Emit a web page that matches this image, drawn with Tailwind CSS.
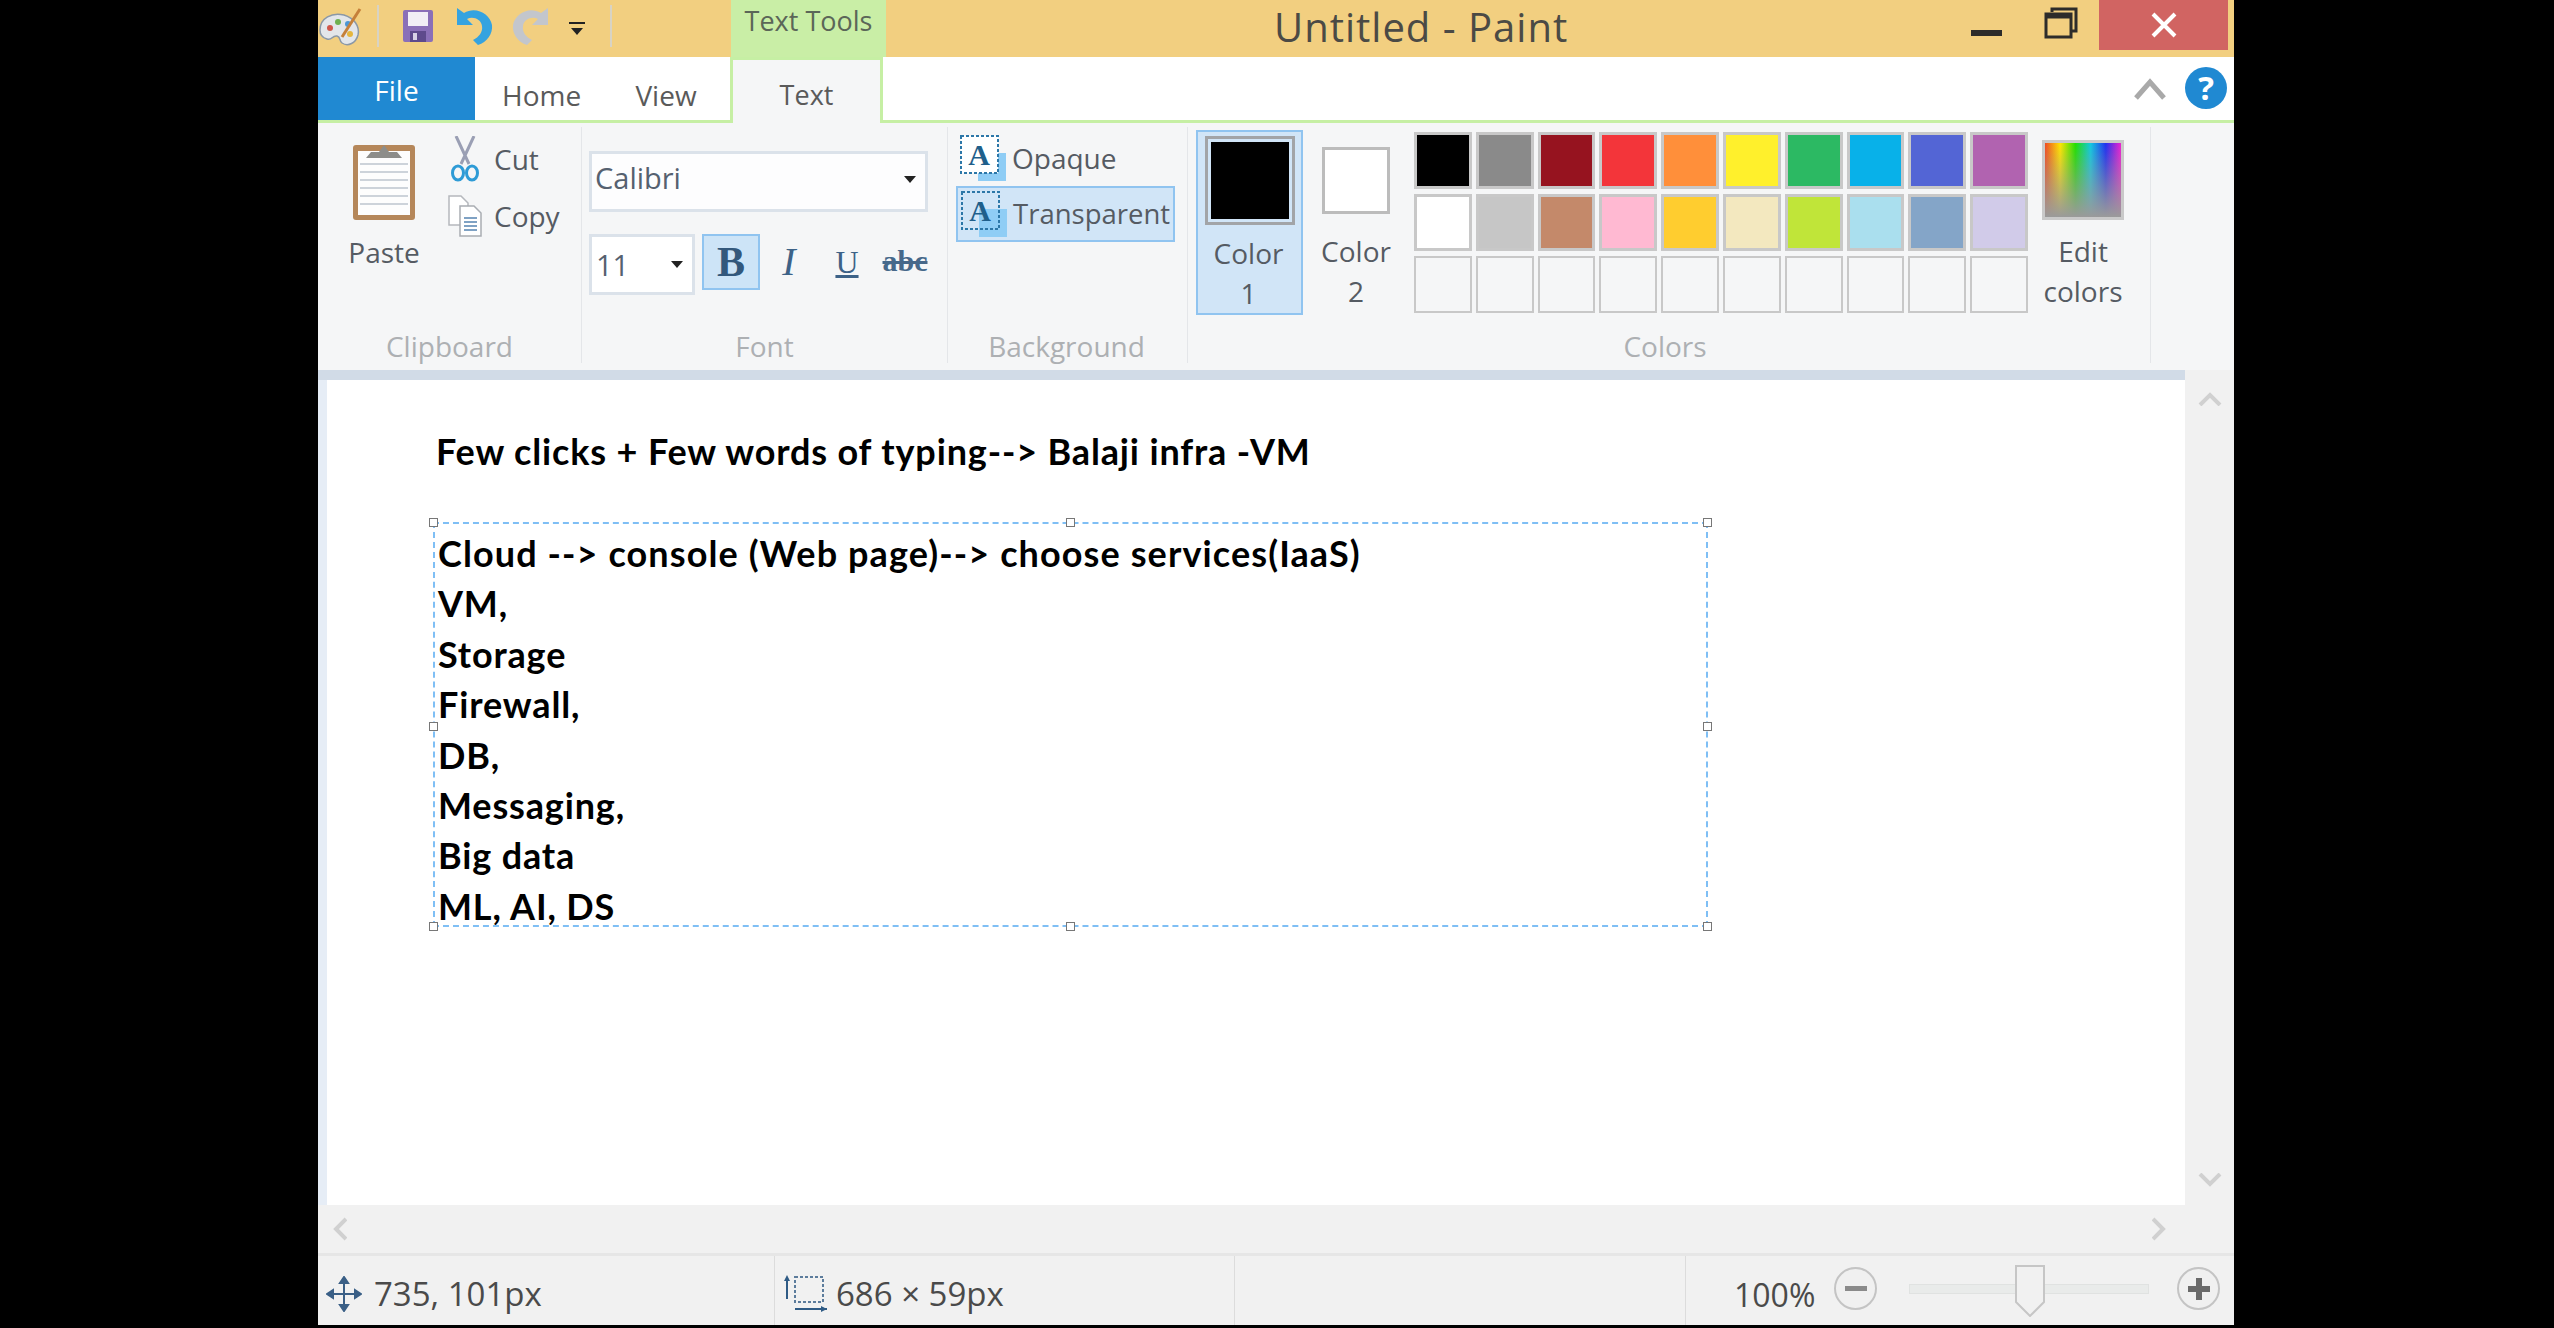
<!DOCTYPE html>
<html lang="en">
<head>
  <meta charset="UTF-8" />
  <title>Untitled - Paint</title>
  <script src="https://cdn.jsdelivr.net/npm/@tailwindcss/browser@4"></script>
</head>
<body class="bg-black w-[2554px] h-[1328px] overflow-hidden pl-[318px] font-['Open_Sans',sans-serif] text-[#555b63]">
  <div class="w-[1916px] h-[1325px] flex flex-col bg-[#f1f1f1]">

    <!-- title bar -->
    <div class="h-[57px] flex items-start bg-[#f2cf80] shrink-0">
      <svg class="w-[44px] h-[46px] mt-[4px]" viewBox="0 0 44 46">
        <path d="M2 26C2 14 14 8 26 11c10 3 16 11 14 20-2 8-10 12-16 8-3-2-1-6-5-7-5-1-5 5-10 3-4-1-7-4-7-9z" fill="#e3e6ea" stroke="#8b98a6" stroke-width="1.5"/>
        <circle cx="12" cy="24" r="3" fill="#d0574a"/><circle cx="20" cy="18" r="3" fill="#6fb04f"/><circle cx="30" cy="20" r="3" fill="#4c97d6"/><circle cx="32" cy="30" r="3" fill="#e5b63e"/>
        <path d="M24 33L42 5" stroke="#c5803a" stroke-width="3"/>
      </svg>
      <div class="w-[2px] h-[42px] mt-[5px] ml-[15px] bg-[#d8d3c4]"></div>
      <svg class="w-[30px] h-[32px] mt-[10px] ml-[24px]" viewBox="0 0 30 32">
        <rect width="30" height="32" rx="2" fill="#8a6fb8"/><rect x="5" y="2" width="20" height="14" fill="#f1eef6"/><rect x="7" y="21" width="16" height="11" fill="#5e4a8c"/><rect x="10" y="23" width="4" height="7" fill="#d8d2e6"/>
      </svg>
      <svg class="w-[38px] h-[40px] mt-[6px] ml-[23px]" viewBox="0 0 38 40">
        <path d="M1 2v17h16l-6-6c6-3 14 0 15 7 1 6-3 11-9 14l5 5c9-3 15-11 14-20C34 8 20 0 8 7L1 2z" fill="#35a3e0"/>
      </svg>
      <svg class="w-[38px] h-[40px] mt-[6px] ml-[17px]" viewBox="0 0 38 40">
        <path d="M37 2v17H21l6-6c-6-3-14 0-15 7-1 6 3 11 9 14l-5 5C7 36 1 28 2 19 4 8 18 0 30 7l7-5z" fill="#c3c6cc"/>
      </svg>
      <div class="w-[16px] mt-[22px] ml-[20px]">
        <div class="h-[2px] bg-[#222]"></div>
        <div class="mt-[4px] mx-auto w-0 h-0 border-x-[6px] border-x-transparent border-t-[7px] border-t-[#222]"></div>
      </div>
      <div class="w-[2px] h-[42px] mt-[5px] ml-[25px] bg-[#d8d3c4]"></div>
      <div class="w-[155px] h-[57px] ml-[119px] bg-[#c9eea6] text-center text-[27px] leading-[42px] text-[#5b6658] whitespace-nowrap">Text Tools</div>
      <div class="ml-[388px] text-[40px] tracking-[1px] leading-[54px] text-[#4b4a45] whitespace-nowrap">Untitled - Paint</div>
      <div class="ml-[403px] w-[31px] h-[6px] mt-[30px] bg-[#2d2c2a]"></div>
      <svg class="w-[34px] h-[32px] mt-[7px] ml-[42px]" viewBox="0 0 34 32" fill="none" stroke="#2d2c2a" stroke-width="3">
        <path d="M8 5V2h24v22h-5"/><rect x="2" y="7" width="25" height="23"/><path d="M2 9h25" stroke-width="5"/>
      </svg>
      <div class="ml-[21px] w-[129px] h-[50px] bg-[#d16462] flex items-center justify-center">
        <svg class="w-[26px] h-[26px]" viewBox="0 0 26 26" stroke="#fff" stroke-width="4"><path d="M2 2l22 22M24 2L2 24"/></svg>
      </div>
    </div>

    <!-- tabs -->
    <div class="h-[66px] flex items-start bg-white border-b-[3px] border-[#c6efa4] shrink-0 relative">
      <div class="w-[157px] h-[63px] bg-[#2089d2] text-white text-center text-[28px] leading-[66px]">File</div>
      <div class="ml-[27px] w-[78px] text-center text-[28px] leading-[76px] text-[#5a5a5a]">Home</div>
      <div class="ml-[54px] w-[64px] text-center text-[28px] leading-[76px] text-[#5a5a5a]">View</div>
      <div class="ml-[32px] w-[153px] h-[66px] bg-[#f5f6f7] border-x-[3px] border-t-[3px] border-[#c6efa4] text-center text-[27px] leading-[70px] text-[#5a5a5a]">Text</div>
      <svg class="absolute left-[1816px] top-[20px] w-[32px] h-[24px]" viewBox="0 0 32 24" fill="none" stroke="#a9a9a9" stroke-width="5"><path d="M2 21L16 5l14 16"/></svg>
      <div class="absolute left-[1867px] top-[10px] w-[42px] h-[42px] rounded-full bg-[#2089d2] text-white text-center font-bold text-[33px] leading-[42px]">?</div>
    </div>

    <!-- ribbon -->
    <div class="h-[247px] flex items-start bg-[#f5f6f7] shrink-0 pt-[4px] text-[28px]">
      <!-- clipboard -->
      <div class="w-[264px] h-[236px] border-r-[1px] border-[#e4e6e9] flex flex-col">
        <div class="flex-1 flex items-start">
          <div class="ml-[34px] w-[64px] mt-[13px] flex flex-col items-center">
            <svg class="w-[64px] h-[80px]" viewBox="0 0 64 80">
              <rect x="1" y="5" width="62" height="75" rx="3" fill="#b5875a"/><rect x="6" y="11" width="52" height="64" fill="#fdfdfd"/>
              <path d="M8 24h48M8 32h48M8 40h48M8 48h48M8 56h48M8 64h48" stroke="#cdd3da" stroke-width="2"/>
              <path d="M14 18l5-6h8l5-7 5 7h8l5 6z" fill="#8d8d8a"/>
            </svg>
            <div class="mt-[12px] leading-[40px] whitespace-nowrap">Paste</div>
          </div>
          <div class="ml-[32px] mt-[8px] flex flex-col">
            <div class="h-[48px] flex items-center">
              <svg class="w-[34px] h-[46px]" viewBox="0 0 34 46" fill="none">
                <path d="M8 0l13 28M26 0L13 28" stroke="#9a9fb4" stroke-width="3"/>
                <ellipse cx="10" cy="37" rx="5.5" ry="7" stroke="#2e9bd6" stroke-width="3"/><ellipse cx="24" cy="37" rx="5.5" ry="7" stroke="#2e9bd6" stroke-width="3"/>
              </svg>
              <span class="ml-[12px]">Cut</span>
            </div>
            <div class="h-[40px] mt-[13px] flex items-center">
              <svg class="w-[34px] h-[42px]" viewBox="0 0 34 42" fill="none">
                <path d="M1 1h12l7 7v22H1z" fill="#fff" stroke="#b5b8bd" stroke-width="1.5"/>
                <path d="M12 11h14l7 7v23H12z" fill="#fff" stroke="#a9adb3" stroke-width="1.5"/>
                <path d="M16 23h13M16 27h13M16 31h13M16 35h13" stroke="#7fa2c4" stroke-width="2"/>
              </svg>
              <span class="ml-[12px]">Copy</span>
            </div>
          </div>
        </div>
        <div class="h-[34px] text-center leading-[34px] text-[#adb0b3]">Clipboard</div>
      </div>
      <!-- font -->
      <div class="w-[366px] h-[236px] border-r-[1px] border-[#e4e6e9] flex flex-col">
        <div class="flex-1 pl-[7px] pt-[24px]">
          <div class="w-[339px] h-[61px] bg-[#fdfdfe] border-[3px] border-[#dbe2ea] flex items-start leading-[48px] justify-between pl-[3px] pr-[9px] text-[29px] text-[#566170]">
            <span>Calibri</span>
            <span class="mt-[22px] w-0 h-0 border-x-[6px] border-x-transparent border-t-[7px] border-t-[#222]"></span>
          </div>
          <div class="mt-[22px] flex items-start">
            <div class="w-[106px] h-[61px] bg-white border-[3px] border-[#dbe2ea] flex items-center justify-between pl-[4px] pr-[9px] text-[29px] text-[#566170]">
              <span>11</span>
              <span class="w-0 h-0 border-x-[6px] border-x-transparent border-t-[7px] border-t-[#222]"></span>
            </div>
            <div class="ml-[7px] w-[58px] h-[56px] bg-[#cde4f7] border-[2px] border-[#90c4f0] text-center font-['Liberation_Serif',serif] font-bold text-[42px] leading-[52px] text-[#33587c]">B</div>
            <div class="w-[58px] h-[56px] text-center font-['Liberation_Serif',serif] italic text-[40px] leading-[56px] text-[#3d6287]">I</div>
            <div class="w-[58px] h-[56px] text-center font-['Liberation_Serif',serif] underline text-[32px] leading-[56px] text-[#3d6287]">U</div>
            <div class="w-[58px] h-[56px] text-center font-['Liberation_Serif',serif] font-bold line-through text-[30px] leading-[54px] text-[#46688a]">abc</div>
          </div>
        </div>
        <div class="h-[34px] text-center leading-[34px] text-[#adb0b3]">Font</div>
      </div>
      <!-- background -->
      <div class="w-[240px] h-[236px] border-r-[1px] border-[#e4e6e9] flex flex-col">
        <div class="flex-1 pl-[8px] pt-[3px]">
          <div class="w-[219px] h-[56px] pl-[4px] flex items-center">
            <svg class="w-[46px] h-[46px]" viewBox="0 0 46 46">
              <rect x="18" y="18" width="28" height="28" fill="#8fcdf5"/>
              <rect x="1" y="1" width="37" height="37" fill="#fff" stroke="#2c77a8" stroke-width="2" stroke-dasharray="3 2"/>
              <text x="19" y="30" text-anchor="middle" font-family="Liberation Serif" font-weight="700" font-size="30" fill="#1f5f8b">A</text>
            </svg>
            <span class="ml-[6px]">Opaque</span>
          </div>
          <div class="w-[219px] h-[56px] pl-[3px] flex items-center bg-[#d1e5f7] border-[2px] border-[#90c4f0]">
            <svg class="w-[46px] h-[46px]" viewBox="0 0 46 46">
              <rect x="18" y="18" width="28" height="28" fill="#8fcdf5"/>
              <rect x="1" y="1" width="37" height="37" fill="none" stroke="#2c77a8" stroke-width="2" stroke-dasharray="3 2"/>
              <text x="19" y="30" text-anchor="middle" font-family="Liberation Serif" font-weight="700" font-size="30" fill="#1f5f8b">A</text>
            </svg>
            <span class="ml-[6px] whitespace-nowrap text-[27.5px]">Transparent</span>
          </div>
        </div>
        <div class="h-[34px] text-center leading-[34px] text-[#adb0b3] pr-[2px]">Background</div>
      </div>
      <!-- colors -->
      <div class="w-[963px] h-[236px] border-r-[1px] border-[#e4e6e9] flex flex-col">
        <div class="flex-1 flex items-start pt-[3px] pl-[8px]">
          <div class="w-[107px] h-[185px] bg-[#d1e5f7] border-[2px] border-[#90c4f0] flex flex-col items-center">
            <div class="mt-[4px] w-[90px] h-[90px] border-[3px] border-[#a2a4a7] p-[3px] bg-[#d1e5f7]"><div class="w-full h-full bg-black"></div></div>
            <div class="mt-[8px] pr-[2px] text-center leading-[40px]">Color<br>1</div>
          </div>
          <div class="ml-[6px] w-[94px] flex flex-col items-center">
            <div class="mt-[17px] w-[68px] h-[67px] bg-white border-[3px] border-[#bcbcbc]"></div>
            <div class="mt-[17px] text-center leading-[40px]">Color<br>2</div>
          </div>
          <div class="ml-[11px] mt-[2px] w-[614px] grid grid-cols-10 gap-x-[4px] gap-y-[5px]">
            <div class="h-[57px] border-[3px] border-[#c8c8c8] bg-[#000000]"></div>
            <div class="h-[57px] border-[3px] border-[#c8c8c8] bg-[#8a8a8a]"></div>
            <div class="h-[57px] border-[3px] border-[#c8c8c8] bg-[#96131f]"></div>
            <div class="h-[57px] border-[3px] border-[#c8c8c8] bg-[#f3353a]"></div>
            <div class="h-[57px] border-[3px] border-[#c8c8c8] bg-[#ff8f3a]"></div>
            <div class="h-[57px] border-[3px] border-[#c8c8c8] bg-[#fff02c]"></div>
            <div class="h-[57px] border-[3px] border-[#c8c8c8] bg-[#2cb963]"></div>
            <div class="h-[57px] border-[3px] border-[#c8c8c8] bg-[#08b1e9]"></div>
            <div class="h-[57px] border-[3px] border-[#c8c8c8] bg-[#5365d5]"></div>
            <div class="h-[57px] border-[3px] border-[#c8c8c8] bg-[#b163b0]"></div>
            <div class="h-[57px] border-[3px] border-[#c8c8c8] bg-[#ffffff]"></div>
            <div class="h-[57px] border-[3px] border-[#c8c8c8] bg-[#c6c6c6]"></div>
            <div class="h-[57px] border-[3px] border-[#c8c8c8] bg-[#c4896a]"></div>
            <div class="h-[57px] border-[3px] border-[#c8c8c8] bg-[#ffb9d2]"></div>
            <div class="h-[57px] border-[3px] border-[#c8c8c8] bg-[#ffcd2f]"></div>
            <div class="h-[57px] border-[3px] border-[#c8c8c8] bg-[#f3e8bf]"></div>
            <div class="h-[57px] border-[3px] border-[#c8c8c8] bg-[#c0e539]"></div>
            <div class="h-[57px] border-[3px] border-[#c8c8c8] bg-[#aadfee]"></div>
            <div class="h-[57px] border-[3px] border-[#c8c8c8] bg-[#84a5c8]"></div>
            <div class="h-[57px] border-[3px] border-[#c8c8c8] bg-[#d1cbe9]"></div>
            <div class="h-[57px] border-[2px] border-[#c8c8c8]"></div>
            <div class="h-[57px] border-[2px] border-[#c8c8c8]"></div>
            <div class="h-[57px] border-[2px] border-[#c8c8c8]"></div>
            <div class="h-[57px] border-[2px] border-[#c8c8c8]"></div>
            <div class="h-[57px] border-[2px] border-[#c8c8c8]"></div>
            <div class="h-[57px] border-[2px] border-[#c8c8c8]"></div>
            <div class="h-[57px] border-[2px] border-[#c8c8c8]"></div>
            <div class="h-[57px] border-[2px] border-[#c8c8c8]"></div>
            <div class="h-[57px] border-[2px] border-[#c8c8c8]"></div>
            <div class="h-[57px] border-[2px] border-[#c8c8c8]"></div>
          </div>
          <div class="ml-[10px] w-[90px] flex flex-col items-center">
            <div class="mt-[10px] w-[82px] h-[80px] border-[3px] border-[#c9c9c9] bg-[linear-gradient(to_bottom,transparent,#9a9a9a),linear-gradient(to_right,#f04a23,#ffe600,#22e000,#10c8e0,#2030f0,#f020d0)]"></div>
            <div class="mt-[11px] text-center leading-[40px]">Edit<br>colors</div>
          </div>
        </div>
        <div class="h-[34px] pr-[8px] text-center leading-[34px] text-[#adb0b3]">Colors</div>
      </div>
    </div>

    <!-- canvas area -->
    <div class="h-[835px] flex shrink-0">
      <div class="w-[1867px] flex flex-col">
        <div class="h-[10px] bg-[#d1dbe7] shrink-0"></div>
        <div class="flex-1 flex">
          <div class="w-[9px] bg-[#e6edf6]"></div>
          <div class="flex-1 bg-white pl-[106px] pt-[50px] text-black font-['Lato',sans-serif] font-bold text-[36px] tracking-[0.85px]">
            <div class="pl-[3px] leading-[42px] whitespace-nowrap">Few clicks + Few words of typing--&gt; Balaji infra -VM</div>
            <div class="relative mt-[50px] w-[1275px] h-[405px] border-[2px] border-dashed border-[#7fbff5]">
              <div class="h-full overflow-hidden pl-[3px] pt-[4px] leading-[50.4px]">
                <div class="tracking-[1.1px]">Cloud --&gt; console (Web page)--&gt; choose services(IaaS)</div>
                <div>VM,</div>
                <div>Storage</div>
                <div>Firewall,</div>
                <div>DB,</div>
                <div>Messaging,</div>
                <div>Big data</div>
                <div>ML, AI, DS</div>
              </div>
              <div class="absolute left-[-6px] top-[-6px] w-[9px] h-[9px] bg-white border border-[#777]"></div>
              <div class="absolute left-[631px] top-[-6px] w-[9px] h-[9px] bg-white border border-[#777]"></div>
              <div class="absolute right-[-6px] top-[-6px] w-[9px] h-[9px] bg-white border border-[#777]"></div>
              <div class="absolute left-[-6px] top-[198px] w-[9px] h-[9px] bg-white border border-[#777]"></div>
              <div class="absolute right-[-6px] top-[198px] w-[9px] h-[9px] bg-white border border-[#777]"></div>
              <div class="absolute left-[-6px] bottom-[-6px] w-[9px] h-[9px] bg-white border border-[#777]"></div>
              <div class="absolute left-[631px] bottom-[-6px] w-[9px] h-[9px] bg-white border border-[#777]"></div>
              <div class="absolute right-[-6px] bottom-[-6px] w-[9px] h-[9px] bg-white border border-[#777]"></div>
            </div>
          </div>
        </div>
      </div>
      <!-- vertical scrollbar -->
      <div class="w-[49px] flex flex-col items-center justify-between pt-[22px] pb-[18px]">
        <svg class="w-[24px] h-[14px]" viewBox="0 0 24 14" fill="none" stroke="#d0d0d0" stroke-width="4"><path d="M2 13L12 3l10 10"/></svg>
        <svg class="w-[24px] h-[14px]" viewBox="0 0 24 14" fill="none" stroke="#d0d0d0" stroke-width="4"><path d="M2 1l10 10L22 1"/></svg>
      </div>
    </div>

    <!-- horizontal scrollbar -->
    <div class="h-[48px] w-[1916px] shrink-0 flex items-center justify-between pl-[15px] pr-[68px]">
      <svg class="w-[14px] h-[24px]" viewBox="0 0 14 24" fill="none" stroke="#d0d0d0" stroke-width="4"><path d="M13 2L3 12l10 10"/></svg>
      <svg class="w-[14px] h-[24px]" viewBox="0 0 14 24" fill="none" stroke="#d0d0d0" stroke-width="4"><path d="M1 2l10 10L1 22"/></svg>
    </div>

    <!-- status bar -->
    <div class="flex-1 border-t-[3px] border-[#e6e6e6] flex items-stretch text-[#4a4a4a] text-[33px]">
      <div class="w-[457px] border-r-[1px] border-[#dcdcdc] pl-[8px] pt-[6px] flex items-center">
        <svg class="w-[36px] h-[36px]" viewBox="0 0 36 36" fill="none" stroke="#3a5f86" stroke-width="2"><path d="M18 2v32M2 18h32"/><path d="M18 1l-4 6h8zM18 35l-4-6h8zM1 18l6-4v8zM35 18l-6-4v8z" fill="#3a5f86"/></svg>
        <span class="ml-[12px] whitespace-nowrap">735, 101px</span>
      </div>
      <div class="w-[460px] border-r-[1px] border-[#dcdcdc] pl-[8px] pt-[6px] flex items-center">
        <svg class="w-[44px] h-[38px]" viewBox="0 0 44 38" fill="none">
          <rect x="12" y="2" width="28" height="25" stroke="#5c7c9c" stroke-width="2" stroke-dasharray="3 2"/>
          <path d="M4 24V2M12 34h32" stroke="#2f5b85" stroke-width="2"/><path d="M4 0L1 6h6zM44 34l-6-3v6z" fill="#2f5b85"/>
        </svg>
        <span class="ml-[9px] whitespace-nowrap">686 × 59px</span>
      </div>
      <div class="w-[451px] border-r-[1px] border-[#dcdcdc]"></div>
      <div class="flex-1 flex items-center pl-[48px] pb-[4px]">
        <span class="mt-[12px] text-[32px]">100%</span>
        <div class="ml-[19px] w-[43px] h-[43px] rounded-full border-[2px] border-[#c4c4c4] bg-[#f0f0f0] flex items-center justify-center"><div class="w-[22px] h-[5px] bg-[#8a8a8a]"></div></div>
        <div class="relative ml-[32px] w-[240px] h-[10px] bg-[#e9ebea] border border-[#e0e2e1]">
          <svg class="absolute left-[105px] top-[-20px] w-[30px] h-[52px]" viewBox="0 0 30 52"><path d="M1 1h28v36L15 51 1 37z" fill="#f1f1f1" stroke="#c6c6c6" stroke-width="2"/></svg>
        </div>
        <div class="ml-[28px] w-[43px] h-[43px] rounded-full border-[2px] border-[#c4c4c4] bg-[#f0f0f0] flex items-center justify-center">
          <svg class="w-[24px] h-[24px]" viewBox="0 0 24 24" fill="#6a6a6a"><path d="M9 1h6v8h8v6h-8v8H9v-8H1V9h8z"/></svg>
        </div>
      </div>
    </div>
  </div>
</body>
</html>
